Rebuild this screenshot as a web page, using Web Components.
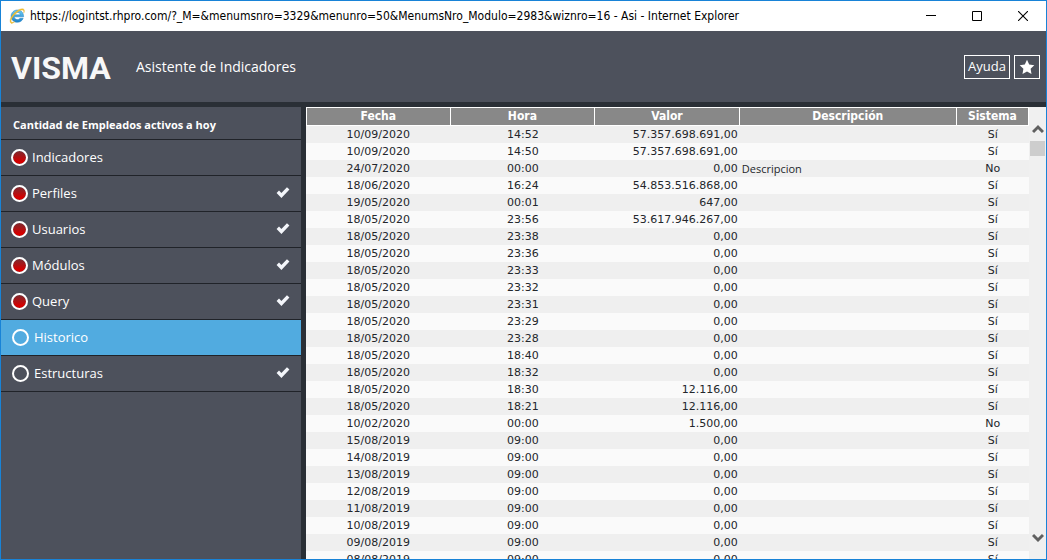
<!DOCTYPE html>
<html lang="es">
<head>
<meta charset="utf-8">
<title>Asistente de Indicadores</title>
<style>
  html, body { height: 100%; margin: 0; }
  body { font-family: "Open Sans", "Noto Sans", sans-serif; font-size: 13px; color: #23262b; }
</style>
</head>
<body>
<app-window>
  <window-bar slot="bar">https://logintst.rhpro.com/?_M=&amp;menumsnro=3329&amp;menunro=50&amp;MenumsNro_Modulo=2983&amp;wiznro=16 - Asi - Internet Explorer</window-bar>
  <app-header slot="header">Asistente de Indicadores</app-header>
  <wizard-menu slot="menu">
    <span slot="title">Cantidad de Empleados activos a hoy</span>
    <wizard-step visited>Indicadores</wizard-step>
    <wizard-step visited done>Perfiles</wizard-step>
    <wizard-step visited done>Usuarios</wizard-step>
    <wizard-step visited done>Módulos</wizard-step>
    <wizard-step visited done>Query</wizard-step>
    <wizard-step current>Historico</wizard-step>
    <wizard-step done>Estructuras</wizard-step>
  </wizard-menu>
  <history-table></history-table>
  <scroll-rail slot="rail"></scroll-rail>
</app-window>

<script>
const define = (name, html, setup) => {
  const template = document.createElement('template');
  template.innerHTML = '<style>*{box-sizing:border-box}:host{box-sizing:border-box}button{font:inherit;color:inherit;margin:0;padding:0;background:none;border:0;cursor:pointer}</style>' + html;
  customElements.define(name, class extends HTMLElement {
    constructor() {
      super();
      this.attachShadow({ mode: 'open' }).append(template.content.cloneNode(true));
    }
    connectedCallback() { if (setup) setup(this, this.shadowRoot); }
  });
};

define('app-window', `
  <style>
    :host { display: flex; flex-direction: column; height: 100vh; border: 1px solid #1883d7; background: #2a2f36; overflow: hidden; }
    .work { flex: 1; min-height: 0; display: grid; grid-template-columns: 300px minmax(0, 1fr); column-gap: 5px; padding-top: 5px; }
    .data { min-width: 0; min-height: 0; display: flex; background: #fafafa; overflow: hidden; }
    main { flex: 1; min-width: 0; overflow: hidden; }
  </style>
  <slot name="bar"></slot>
  <slot name="header"></slot>
  <div class="work">
    <slot name="menu"></slot>
    <div class="data"><main><slot></slot></main><slot name="rail"></slot></div>
  </div>`);

define('window-bar', `
  <style>
    :host { display: flex; flex: none; align-items: center; height: 30px; padding-left: 8px; background: #fff; color: #000; font: 12px/16px "DejaVu Sans Condensed", "DejaVu Sans", sans-serif; white-space: nowrap; }
    .logo { flex: none; margin-right: 5px; }
    .text { flex: 1; min-width: 0; overflow: hidden; }
    button { flex: none; display: grid; place-items: center; width: 46px; height: 30px; }
    svg { display: block; }
  </style>
  <svg class="logo" width="16" height="16" viewBox="0 0 16 16" aria-hidden="true">
    <defs><linearGradient id="b" x1="0" y1="0" x2="0" y2="1"><stop offset="0" stop-color="#6fcdf5"/><stop offset="1" stop-color="#1b7fc9"/></linearGradient></defs>
    <path d="M14.6 8.8H5.2c.2 1.700 1.500 2.800 3.200 2.800 1.200 0 2-.5 2.600-1.300h3.200c-.9 2.500-3.200 4-5.800 4-3.500 0-6.300-2.500-6.300-6.100S4.900 2 8.400 2c3.700 0 6.200 2.600 6.200 6.800ZM5.300 6.800h6.100C11.200 5.400 10 4.500 8.400 4.500S5.600 5.400 5.300 6.800Z" fill="url(#b)" stroke="#2182c4" stroke-width=".5"/>
    <path d="M2 15.200C-.6 13 2.300 7.500 6.500 4 10 1 13.800-.2 15 1.400c.7 1 .4 2.500-.3 3.800.3-1.700.2-2.700-.8-3C12 1.600 8.600 3.700 5.700 6.800 2.600 10 1.300 13.300 2.500 14.100c.8.500 2.200.1 3.600-.7-1.600 1.500-3.200 2.400-4.100 1.800Z" fill="#f6c432" stroke="#dba21c" stroke-width=".3"/>
  </svg>
  <span class="text"><slot></slot></span>
  <button aria-label="Minimizar"><svg width="10" height="10"><path d="M0 4.500h10" stroke="#000"/></svg></button>
  <button aria-label="Maximizar"><svg width="10" height="10"><path d="M.5.5h9v9h-9z" fill="none" stroke="#000"/></svg></button>
  <button aria-label="Cerrar"><svg width="10" height="10"><path d="M0 0l10 10M10 0L0 10" stroke="#000" stroke-width="1.100"/></svg></button>`);

define('app-header', `
  <style>
    :host { display: flex; flex: none; align-items: center; height: 71px; padding: 0 6px 0 10px; background: #4d515c; color: #fff; }
    .brand { width: 125px; padding-top: 2px; font: 700 32px/40px Roboto, sans-serif; color: #f7f7f7; }
    h1 { flex: 1; margin: 0; font-size: 14px; line-height: 20px; font-weight: 400; }
    .tools { display: flex; gap: 4px; }
    .tools button { display: grid; place-items: center; width: 26px; height: 24px; border: 1px solid #fff; line-height: 20px; }
    .tools .help { width: 46px; padding-bottom: 2px; }
  </style>
  <span class="brand">VISMA</span>
  <h1><slot></slot></h1>
  <div class="tools">
    <button class="help">Ayuda</button>
    <button aria-label="Favorito"><svg width="16" height="16" viewBox="0 0 16 16"><path d="M8 .8l2.200 4.700 5.100.7-3.700 3.600.9 5.200L8 12.500l-4.500 2.500.9-5.200L.7 6.200l5.100-.7z" fill="#fff"/></svg></button>
  </div>`);

define('wizard-menu', `
  <style>
    :host { display: block; background: #4d515c; color: #fff; }
    h2 { margin: 0; height: 33px; padding: 8px 12px 0; font-size: 11px; line-height: 20px; border-bottom: 1px solid #202329; white-space: nowrap; }
  </style>
  <h2><slot name="title"></slot></h2>
  <nav><slot></slot></nav>`);

define('wizard-step', `
  <style>
    :host { display: block; border-bottom: 1px solid #202329; }
    :host([current]) { background: #51abe0; }
    a { display: flex; align-items: center; height: 35px; padding: 0 11px 0 10px; color: inherit; text-decoration: none; line-height: 20px; }
    .dot { flex: none; width: 17px; height: 17px; margin: 0 5px 0 1px; border: 2px solid #fff; border-radius: 50%; }
    :host([visited]) .dot { margin: 0 4px 0 0; background: linear-gradient(#7c2b30, #d40000 80%) padding-box; }
    .label { flex: 1; padding-bottom: 2px; }
    .tick { display: none; margin-bottom: 3px; }
    :host([done]) .tick { display: block; }
  </style>
  <a href="#"><span class="dot"></span><span class="label"><slot></slot></span>
    <svg class="tick" width="14" height="12" viewBox="0 0 14 12" aria-hidden="true"><path d="M1.800 5.800l3.600 3.700L12.200 2.300" fill="none" stroke="#f4f6fb" stroke-width="3.400"/></svg></a>`);

const rows = [
  ['10/09/2020', '14:52', '57.357.698.691,00'], ['10/09/2020', '14:50', '57.357.698.691,00'],
  ['24/07/2020', '00:00', '0,00', 'Descripcion', 'No'], ['18/06/2020', '16:24', '54.853.516.868,00'],
  ['19/05/2020', '00:01', '647,00'], ['18/05/2020', '23:56', '53.617.946.267,00'],
  ...['23:38', '23:36', '23:33', '23:32', '23:31', '23:29', '23:28', '18:40', '18:32'].map(h => ['18/05/2020', h, '0,00']),
  ['18/05/2020', '18:30', '12.116,00'], ['18/05/2020', '18:21', '12.116,00'],
  ['10/02/2020', '00:00', '1.500,00', '', 'No'],
  ...['15', '14', '13', '12', '11', '10', '09', '08'].map(d => [d + '/08/2019', '09:00', '0,00'])
];

define('history-table', `
  <style>
    :host { display: block; }
    table { width: 100%; table-layout: fixed; border-collapse: separate; border-spacing: 0; }
    .time { width: 20%; } .desc { width: 30%; } .sys { width: 10%; }
    th { height: 19px; padding: 0; border: 1px solid #fff; border-left-width: 0; background: #888; background-clip: padding-box; color: #fff; font: 700 12px/17px "DejaVu Sans Condensed", "DejaVu Sans", sans-serif; }
    th:first-child { border-left-width: 1px; }
    td { height: 17px; padding: 0 2px; text-align: center; font: 11px/17px "DejaVu Sans", sans-serif; white-space: nowrap; }
    td:nth-child(3) { text-align: right; }
    td:nth-child(4) { text-align: left; font-family: "Open Sans", sans-serif; }
    tbody tr:nth-child(odd) { background: #efefef; }
  </style>
  <table>
    <colgroup><col class="time"><col class="time"><col class="time"><col class="desc"><col class="sys"></colgroup>
    <thead><tr><th>Fecha</th><th>Hora</th><th>Valor</th><th>Descripción</th><th>Sistema</th></tr></thead>
    <tbody></tbody>
  </table>`, (host, root) => {
    const body = root.querySelector('tbody');
    body.replaceChildren();
    for (const [date, time, value, text = '', system = 'Sí'] of rows) {
      const tr = body.insertRow();
      for (const cell of [date, time, value, text, system]) tr.insertCell().textContent = cell;
    }
  });

define('scroll-rail', `
  <style>
    :host { display: flex; flex: none; flex-direction: column; align-items: center; width: 17px; padding: 13px 0; background: #f0f0f0; }
    button { display: grid; place-items: center; width: 17px; height: 17px; }
    .thumb { width: 15px; height: 15px; margin-top: 4px; background: #cdcdcd; }
    .down { margin-top: auto; }
  </style>
  <button aria-label="Subir"><svg width="12" height="10"><path d="M1 8l5-5 5 5" fill="none" stroke="#606060" stroke-width="3"/></svg></button>
  <div class="thumb"></div>
  <button class="down" aria-label="Bajar"><svg width="12" height="10"><path d="M1 2l5 5 5-5" fill="none" stroke="#606060" stroke-width="3"/></svg></button>`);
</script>
</body>
</html>
